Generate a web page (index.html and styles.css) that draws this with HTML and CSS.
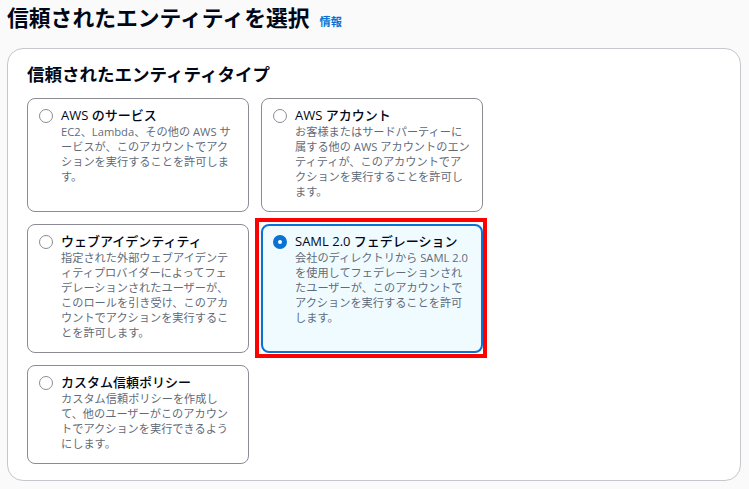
FILE: index.html
```html
<!DOCTYPE html>
<html lang="ja">
<head>
<meta charset="UTF-8" />
<meta name="viewport" content="width=device-width, initial-scale=1" />
<title>信頼されたエンティティを選択</title>
<link rel="stylesheet" href="styles.css">
</head>
<body>
<div class="page-header">
  <h1>信頼されたエンティティを選択</h1>
  <a class="info-link" href="#">情報</a>
</div>

<div class="container">
  <h2>信頼されたエンティティタイプ</h2>
  <div class="tiles">
    <label class="tile">
      <span class="radio"></span>
      <span class="tile-body">
        <span class="tile-label">AWS のサービス</span>
        <span class="tile-desc">EC2、Lambda、その他の AWS サービスが、このアカウントでアクションを実行することを許可します。</span>
      </span>
    </label>
    <label class="tile">
      <span class="radio"></span>
      <span class="tile-body">
        <span class="tile-label">AWS アカウント</span>
        <span class="tile-desc">お客様またはサードパーティーに属する他の AWS アカウントのエンティティが、このアカウントでアクションを実行することを許可します。</span>
      </span>
    </label>
    <label class="tile">
      <span class="radio"></span>
      <span class="tile-body">
        <span class="tile-label">ウェブアイデンティティ</span>
        <span class="tile-desc">指定された外部ウェブアイデンティティプロバイダーによってフェデレーションされたユーザーが、このロールを引き受け、このアカウントでアクションを実行することを許可します。</span>
      </span>
    </label>
    <label class="tile selected">
      <span class="radio"></span>
      <span class="tile-body">
        <span class="tile-label">SAML 2.0 フェデレーション</span>
        <span class="tile-desc">会社のディレクトリから SAML 2.0 を使用してフェデレーションされたユーザーが、このアカウントでアクションを実行することを許可します。</span>
      </span>
    </label>
    <label class="tile">
      <span class="radio"></span>
      <span class="tile-body">
        <span class="tile-label">カスタム信頼ポリシー</span>
        <span class="tile-desc">カスタム信頼ポリシーを作成して、他のユーザーがこのアカウントでアクションを実行できるようにします。</span>
      </span>
    </label>
  </div>
</div>
</body>
</html>
```

FILE: styles.css
```css
body {
  margin: 0;
  padding: 2px 8px 0 7px;
  background: #fafafa;
  color: #000716;
  font-family: "Open Sans", "Noto Sans CJK JP", sans-serif;
}
.page-header {
  display: flex;
  align-items: baseline;
  gap: 10px;
}
h1 {
  margin: 0;
  font-size: 21.8px;
  line-height: 30px;
  font-weight: 700;
  font-family: "Noto Sans CJK JP", sans-serif;
}
.info-link {
  color: #0972d3;
  font-size: 11.2px;
  font-weight: 700;
  text-decoration: none;
}
.container {
  margin-top: 16px;
  background: #fff;
  border: 1px solid #c6c6cd;
  border-radius: 16px;
  padding: 13px 19px 16px;
}
h2 {
  margin: 0 0 12px;
  font-size: 17.5px;
  line-height: 24px;
  font-weight: 700;
  font-family: "Noto Sans CJK JP", sans-serif;
}
.tiles {
  display: grid;
  grid-template-columns: 222px 222px;
  gap: 12px;
}
.tile {
  position: relative;
  display: flex;
  align-items: flex-start;
  gap: 8px;
  border: 1px solid #8c8c94;
  border-radius: 8px;
  padding: 7px 12px 12px 11px;
  cursor: pointer;
}
.radio {
  flex: none;
  box-sizing: border-box;
  width: 14px;
  height: 14px;
  margin-top: 3px;
  border: 1.5px solid #8c8c94;
  border-radius: 50%;
  background: #fff;
}
.tile-body {
  display: flex;
  flex-direction: column;
}
.tile-label {
  font-size: 13px;
  line-height: 18px;
  font-weight: 500;
}
.tile-desc {
  font-size: 11.2px;
  line-height: 15px;
  color: #5f6b7a;
}
.tile.selected {
  border: 2px solid #0972d3;
  background: #f0fbff;
  padding: 6px 11px 11px 10px;
}
.tile.selected .radio {
  border: 5px solid #0972d3;
}
.tile.selected::after {
  content: "";
  position: absolute;
  top: -8px;
  left: -8px;
  right: -6px;
  bottom: -7px;
  border: 4px solid #ff0000;
  pointer-events: none;
}
```
